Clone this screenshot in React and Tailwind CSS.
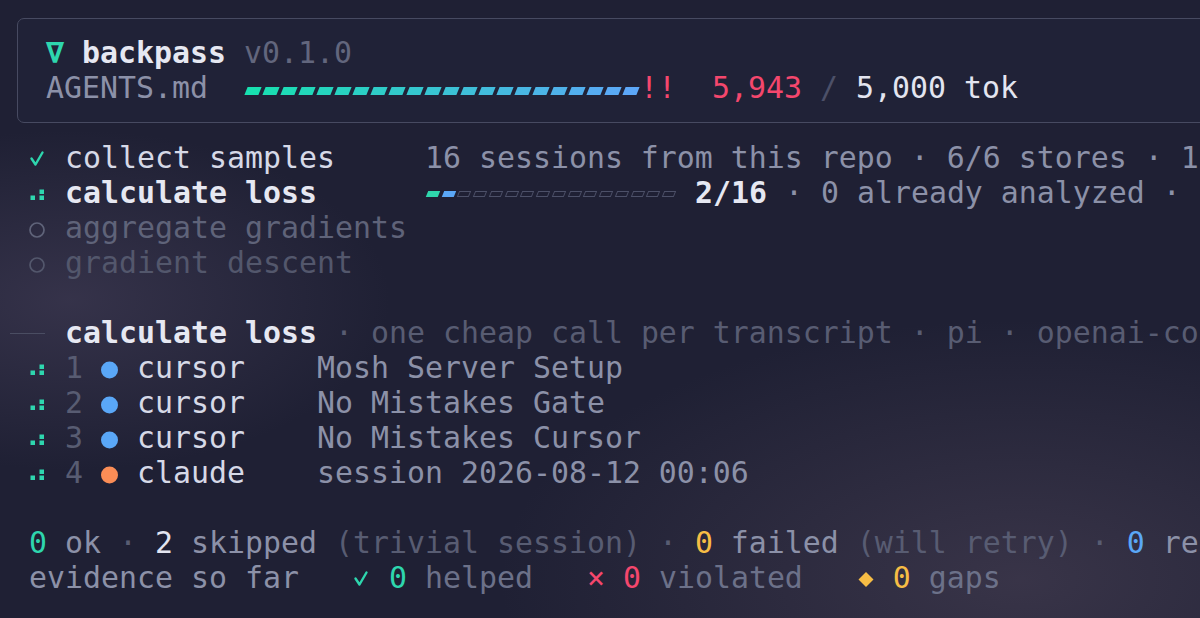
import React from "react";

const TEAL = "#2ed6ae";

const lerp = (a, b, t) => Math.round(a + (b - a) * t);

const barColor = (i, n) => {
  const t = i / (n - 1);
  const from = [24, 224, 176];
  const to = [92, 167, 248];
  return `rgb(${lerp(from[0], to[0], t)}, ${lerp(from[1], to[1], t)}, ${lerp(from[2], to[2], t)})`;
};

const Dots = () => (
  <svg width="18" height="35" viewBox="0 0 18 35" className="shrink-0">
    <rect x="1.5" y="20.5" width="4.5" height="4.5" fill={TEAL} />
    <rect x="10.5" y="14.5" width="4.5" height="4.5" fill={TEAL} />
    <rect x="10.5" y="20.5" width="4.5" height="4.5" fill={TEAL} />
  </svg>
);

const Check = () => (
  <svg width="18" height="35" viewBox="0 0 18 35" className="shrink-0">
    <path
      d="M2.5 18.5 L6.5 24.5 L13.5 12.5"
      fill="none"
      stroke={TEAL}
      strokeWidth="2.4"
      strokeLinecap="round"
      strokeLinejoin="round"
    />
  </svg>
);

const Ring = ({ color }) => (
  <svg width="18" height="35" viewBox="0 0 18 35" className="shrink-0">
    <circle cx="8" cy="20" r="7" fill="none" stroke={color} strokeWidth="1.7" />
  </svg>
);

const Bullet = ({ color }) => (
  <svg width="18" height="35" viewBox="0 0 18 35" className="shrink-0">
    <circle cx="8.5" cy="20" r="8.5" fill={color} />
  </svg>
);

const Diamond = () => (
  <svg width="18" height="35" viewBox="0 0 18 35" className="shrink-0">
    <path d="M9 12 L16.5 19.5 L9 27 L1.5 19.5 Z" fill="#f7bd45" />
  </svg>
);

const TokenBar = () => (
  <div className="flex shrink-0 items-start pt-[17px]">
    {Array.from({ length: 22 }).map((_, i) => (
      <div key={i} className="w-[18px] shrink-0">
        <div
          className="ml-[2px] h-[8px] w-[14px] skew-x-[-22deg]"
          style={{ background: barColor(i, 22) }}
        />
      </div>
    ))}
  </div>
);

const ProgressBar = ({ done, total }) => (
  <div className="flex shrink-0 items-start pt-[16px]">
    {Array.from({ length: total }).map((_, i) => (
      <div key={i} className="w-[15.75px] shrink-0">
        {i < done ? (
          <div
            className={`ml-[2px] h-[6px] w-[12px] skew-x-[-22deg] ${i === 0 ? "bg-[#2fd6ac]" : "bg-[#5aa7f7]"}`}
          />
        ) : (
          <div className="ml-[2px] h-[6px] w-[12px] skew-x-[-22deg] border border-[#4c5068]" />
        )}
      </div>
    ))}
  </div>
);

const Row = ({ children }) => (
  <div className="flex h-[35px] whitespace-pre">{children}</div>
);

const sessions = [
  { n: 1, agent: "cursor", color: "#5aa7f7", title: "Mosh Server Setup" },
  { n: 2, agent: "cursor", color: "#5aa7f7", title: "No Mistakes Gate" },
  { n: 3, agent: "cursor", color: "#5aa7f7", title: "No Mistakes Cursor" },
  { n: 4, agent: "claude", color: "#fb8d56", title: "session 2026-08-12 00:06" },
];

export default function App() {
  return (
    <div className="h-[618px] w-[1200px] overflow-hidden bg-[#1f2034] bg-[radial-gradient(ellipse_320px_170px_at_70px_300px,rgba(72,66,92,0.55),transparent),radial-gradient(ellipse_520px_260px_at_1020px_580px,rgba(82,72,92,0.5),transparent)] pt-[18px] font-['DejaVu_Sans_Mono',monospace] text-[29.9px] leading-[35px]">
      <div className="ml-[17px] w-[1300px] rounded-[7px] border border-[#474a61] bg-[#24253b]/40 pb-[17px] pl-[28px] pt-[16px]">
        <Row>
          <span className="font-bold text-[#2ed6ae]">∇ </span>
          <span className="font-bold text-[#e6e8f2]">backpass</span>
          <span className="text-[#62667d]"> v0.1.0</span>
        </Row>
        <Row>
          <span className="text-[#8c91a8]">AGENTS.md  </span>
          <TokenBar />
          <span className="text-[#f4476d]">!!  5,943</span>
          <span className="text-[#4c5068]"> / </span>
          <span className="text-[#e3e5f0]">5,000 tok</span>
        </Row>
      </div>

      <div className="mt-[17px] pl-[29px]">
        <Row>
          <Check />
          <span className="text-[#d6d9e7]"> collect samples     </span>
          <span className="text-[#8c91a8]">
            16 sessions from this repo · 6/6 stores · 1
          </span>
        </Row>
        <Row>
          <Dots />
          <span> </span>
          <span className="font-bold text-[#e6e8f2]">calculate loss</span>
          <span>      </span>
          <ProgressBar done={2} total={16} />
          <span> </span>
          <span className="font-bold text-[#e6e8f2]">2/16</span>
          <span className="text-[#8c91a8]"> · 0 already analyzed · </span>
        </Row>
        <Row>
          <Ring color="#5f6379" />
          <span className="text-[#5f6379]"> aggregate gradients</span>
        </Row>
        <Row>
          <Ring color="#53576c" />
          <span className="text-[#53576c]"> gradient descent</span>
        </Row>
        <Row />

        <Row>
          <div className="w-[36px] shrink-0">
            <div className="-ml-[19px] mt-[18px] h-px w-[35px] bg-[#4a4d62]" />
          </div>
          <span className="font-bold text-[#e6e8f2]">calculate loss</span>
          <span className="text-[#585c72]">
            {" · one cheap call per transcript · pi · openai-co"}
          </span>
        </Row>
        {sessions.map((s) => (
          <Row key={s.n}>
            <Dots />
            <span className="text-[#585c72]">{` ${s.n} `}</span>
            <Bullet color={s.color} />
            <span className="text-[#d6d9e7]">{` ${s.agent}    `}</span>
            <span className="text-[#8c91a8]">{s.title}</span>
          </Row>
        ))}
        <Row />

        <Row>
          <span className="text-[#2ed6ae]">0</span>
          <span className="text-[#8c91a8]"> ok </span>
          <span className="text-[#585c72]">· </span>
          <span className="text-[#e3e5f0]">2</span>
          <span className="text-[#8c91a8]"> skipped </span>
          <span className="text-[#585c72]">(trivial session) · </span>
          <span className="text-[#f7bd45]">0</span>
          <span className="text-[#8c91a8]"> failed </span>
          <span className="text-[#585c72]">(will retry) · </span>
          <span className="text-[#5aa7f7]">0</span>
          <span className="text-[#8c91a8]"> re</span>
        </Row>
        <Row>
          <span className="text-[#8c91a8]">evidence so far   </span>
          <Check />
          <span> </span>
          <span className="text-[#2ed6ae]">0</span>
          <span className="text-[#6c7189]"> helped   </span>
          <span className="text-[#f4476d]">× 0</span>
          <span className="text-[#6c7189]"> violated   </span>
          <Diamond />
          <span> </span>
          <span className="text-[#f7bd45]">0</span>
          <span className="text-[#6c7189]"> gaps</span>
        </Row>
      </div>
    </div>
  );
}
